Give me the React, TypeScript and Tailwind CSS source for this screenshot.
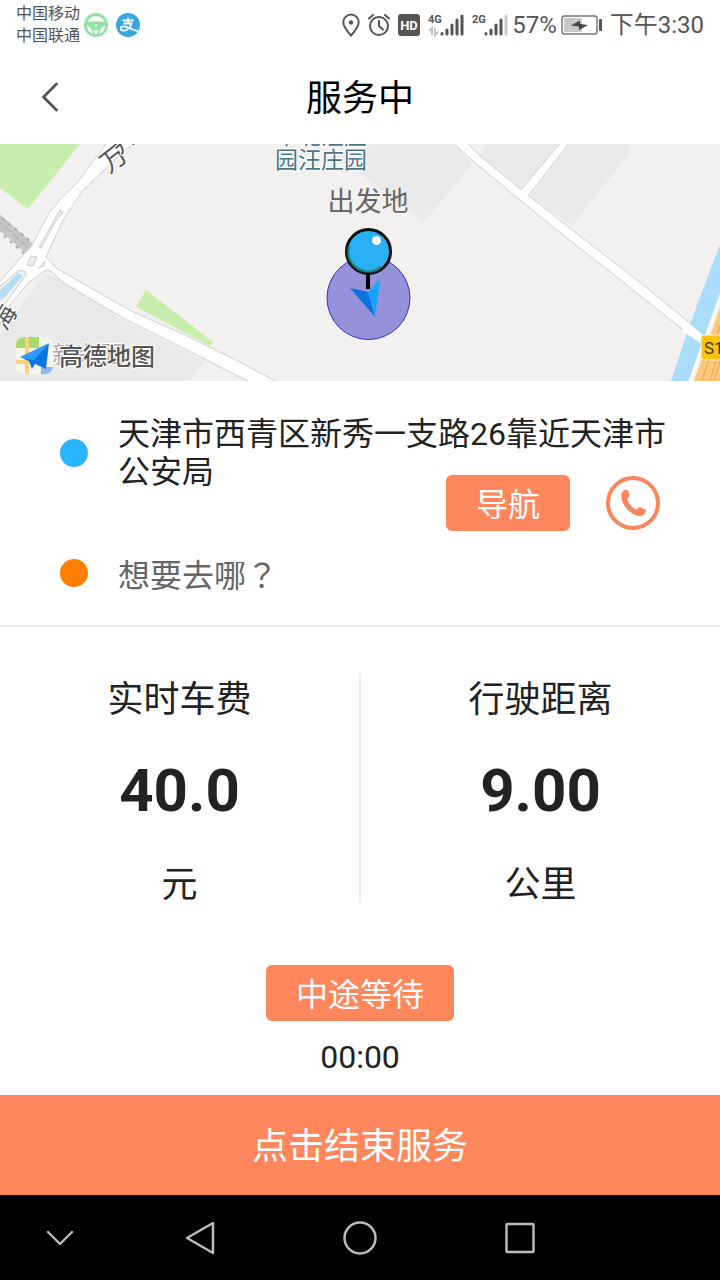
import { ChevronDown, ChevronLeft } from "lucide-react";

function Carriers() {
  return (
    <div className="flex items-center gap-1">
      <div className="text-base leading-[22px] text-[#555555]">
        <p>中国移动</p>
        <p>中国联通</p>
      </div>
      <svg className="size-6" viewBox="0 0 24 24" aria-hidden="true">
        <circle cx="12" cy="12" r="12" fill="#93e3a4" />
        <path d="M3.500 9A9.200 9.200 0 0 1 20.500 9Q12 7.500 3.500 9Z" fill="#fff" />
        <path
          d="M2.700 12.500Q7.500 13.500 8.800 20.800A9.300 9.300 0 0 1 2.700 12.500ZM21.300 12.500Q16.500 13.500 15.200 20.800A9.300 9.300 0 0 0 21.300 12.500Z"
          fill="#fff"
        />
        <path d="M10.800 21.200L9.500 18Q12 16 14.500 18L13.200 21.200Z" fill="#fff" />
        <circle cx="12" cy="12.300" r="1.300" fill="#fff" />
      </svg>
      <svg className="ml-1 size-6" viewBox="0 0 24 24" aria-hidden="true">
        <circle cx="12" cy="12" r="12" fill="#36a6dd" />
        <path
          d="M6.500 7.500H17.500M12 4.500V10.500M7.500 10.500H15.500C14.500 14 11.500 17.700 7.500 17.700C3.800 17.700 3.800 13.300 7.500 13.300C11.500 13.300 15 16.500 22.500 18.300"
          fill="none"
          stroke="#fff"
          strokeWidth="1.800"
        />
      </svg>
    </div>
  );
}

function Signal({ label, weak }: { label: string; weak?: boolean }) {
  return (
    <svg className="h-6 w-9" viewBox="0 0 36 24" aria-hidden="true">
      <text x="0" y="10" fontSize="11" fontWeight="700" fill="#555">
        {label}
      </text>
      {!weak && (
        <path d="M4 22V15L1 18M7 15V22L10 19" fill="none" stroke="#c4c4c4" strokeWidth="2" />
      )}
      <g strokeWidth="3" strokeLinecap="round" stroke="#555">
        <path d="M14 21V20.500M19 21V17M24 21V12M29 21V7" />
        <path d="M34 21V3" stroke={weak ? "#cccccc" : "#555555"} />
      </g>
    </svg>
  );
}

function StatusBar() {
  return (
    <div className="flex h-[50px] items-center justify-between px-4 text-[#555555]">
      <Carriers />
      <div className="flex items-center gap-2 text-2xl">
        <svg className="h-6 w-[18px]" viewBox="0 0 18 24" fill="none" stroke="#555" strokeWidth="2" aria-hidden="true">
          <path d="M9 22.500C5 18 1.300 14 1.300 9.300A7.700 7.700 0 0 1 16.700 9.300C16.700 14 13 18 9 22.500Z" />
          <circle cx="9" cy="9.500" r="2.200" fill="#555" stroke="none" />
        </svg>
        <svg className="h-6 w-[22px]" viewBox="0 0 22 24" fill="none" stroke="#555" strokeWidth="2" aria-hidden="true">
          <circle cx="11" cy="13" r="9" />
          <path d="M11 8V13L15 16.500M1 5.500L5 2M21 5.500L17 2" strokeLinecap="round" />
        </svg>
        <svg className="h-6 w-[22px]" viewBox="0 0 22 24" aria-hidden="true">
          <rect y="1" width="22" height="22" rx="3" fill="#555" />
          <text x="11" y="17" fontSize="13" fontWeight="700" fill="#fff" textAnchor="middle">
            HD
          </text>
        </svg>
        <Signal label="4G" />
        <Signal label="2G" weak />
        <span className="-mx-1">57%</span>
        <svg className="h-5 w-[41px]" viewBox="0 0 41 20" aria-hidden="true">
          <rect x="1" y="1" width="35" height="18" rx="2.500" fill="#fff" stroke="#777" strokeWidth="1.500" />
          <rect x="3" y="3" width="18" height="14" fill="#c8c8c8" />
          <path d="M10 10.500L19 5.500V9L27 10L18 15V11.500Z" fill="#444" />
          <rect x="38" y="4" width="3" height="12" rx="1" fill="#555" />
        </svg>
        <span>下午3:30</span>
      </div>
    </div>
  );
}

function TripMap() {
  return (
    <svg
      className="block w-full"
      viewBox="0 0 720 237"
      role="img"
      aria-label="高德地图"
      strokeLinejoin="round"
    >
      <rect width="720" height="237" fill="#f2f1f0" />
      {/* blocks */}
      <path d="M45 130L60 135L120 175L204 217L190 237H0V190Z" fill="#e9e9e9" />
      <path d="M335 10L375 0H455L472 20L424 78Z" fill="#e9e9e9" />
      <path d="M486 0H558L521 47L480 11ZM570 0H630V8L572 82L530 51Z" fill="#e9e9e9" />
      <path d="M0 0H80L28 65L0 44Z" fill="#c8eeae" />
      <path d="M146 146L213 198L210 202L136 163Z" fill="#c8eeae" />
      {/* railway */}
      <path d="M-4 75L31 106" stroke="#c5c5c5" strokeWidth="12" />
      <path d="M-4 69L35 101M-8 81L27 112" stroke="#aaa" strokeDasharray="3 5" strokeWidth="2" />
      <path d="M-4 75L31 106" stroke="#aaa" strokeDasharray="8 3" />
      {/* roads */}
      <g fill="#fff" stroke="#cfcfcf">
        <path d="M108 -2L77 39Q60 54 49 69L31 103L21 113L-2 140V180L6 166L28 139L46 126L51 127L64 139L123 174L183 204L250 238H277L236 216L183 190L133 168L89 143L56 124L46 113L63 76L83 46L134 -2Z" />
        <path d="M466 -2L480 12L523 47L580 92L647 144L702 189V201L687 189L613 130L553 83L480 23L452 -2Z" />
        <path d="M561 -2L521 46L528 52L570 -2Z" />
      </g>
      <path d="M520 48L527 53" stroke="#fff" strokeWidth="5" />
      <path d="M39 103L60 66L63 68L56 77L41 104Z" fill="#eee" stroke="#ccc" />
      <path d="M31 112L37 113L33 122L27 121ZM39 124L45 117L44 122Z" fill="#eee" stroke="#ccc" />
      <path d="M-2 144L18 127Q25 125 26 131L2 164H-2Z" fill="#f2f1f0" stroke="#ccc" />
      <path d="M-1 147L18 129L23 132L4 154L-1 156Z" fill="#b4ddf5" />
      {/* river and highway */}
      <path d="M722 95L690 180L671 237H690L722 148Z" fill="#aadcfb" />
      <path d="M722 148L690 237" stroke="#fff" strokeWidth="3" />
      <path d="M722 158L694 237H722Z" fill="#ffc878" />
      <path d="M722 176L702 237M722 196L710 237M722 210L714 237" stroke="#dfa050" />
      <path d="M686 177L702 190V200L682 187Z" fill="#fff" />
      <rect x="701" y="191" width="26" height="25" rx="3" fill="#fbc414" stroke="#fff2c8" />
      <text x="704" y="210" fontSize="17" fill="#4a3a10">
        S1
      </text>
      {/* place names */}
      <g fill="#555" stroke="#fff" strokeWidth="2" paintOrder="stroke" fontSize="24">
        <text transform="translate(109 30) rotate(-38)" fontSize="26">
          万
        </text>
        <text transform="translate(120 11) rotate(-42)">卉</text>
        <text transform="translate(6 188) rotate(-60)">海</text>
        <g fill="#4a7689" fontSize="23">
          <text x="275" y="0">
            中北汪庄
          </text>
          <text x="275" y="24">
            园汪庄园
          </text>
        </g>
        <text x="52" y="219" fill="#aaa">
          新兴园
        </text>
      </g>
      <text x="368" y="67" fontSize="27" fill="#666" textAnchor="middle">
        出发地
      </text>
      {/* current position */}
      <circle cx="368.500" cy="154" r="41.500" fill="#9392da" stroke="#3430b8" />
      <path d="M368 126V145" stroke="#000" strokeWidth="4" />
      <circle cx="368.500" cy="107.500" r="22" fill="#29b1f8" stroke="#0b1010" strokeWidth="3" />
      <path d="M349 102A20 20 0 0 0 381 123" fill="none" stroke="#18785f" strokeOpacity="0.6" strokeWidth="3" />
      <circle cx="376.500" cy="96.500" r="4.500" fill="#fff" />
      <path d="M350 144L368 148L375 173Z" fill="#0d72dd" />
      <path d="M368 148L380 135L375 173Z" fill="#12a5fa" />
      {/* provider logo */}
      <clipPath id="logo">
        <rect x="16" y="193" width="37" height="37" rx="8" />
      </clipPath>
      <g clipPath="url(#logo)">
        <rect x="16" y="193" width="37" height="37" fill="#f7f4ea" />
        <path d="M16 193H39V204H16Z" fill="#a5d96b" />
        <path d="M41 223H53V230H41Z" fill="#8db8f5" />
        <path d="M27 193V230M16 218H40" stroke="#fbd07a" strokeWidth="4" />
      </g>
      <path d="M20 213L49 199L34 217Z" fill="#2b9df7" />
      <path d="M49 199L46 225L20 213L34 216ZM29 217L35 220L32 225Z" fill="#0c76e0" />
      <text
        x="59"
        y="221"
        fontSize="24"
        fontWeight="500"
        fill="#555"
        stroke="#fff"
        strokeWidth="2"
        paintOrder="stroke"
      >
        高德地图
      </text>
    </svg>
  );
}

function Stat({ label, value, unit }: { label: string; value: string; unit: string }) {
  return (
    <div className="flex flex-1 flex-col items-center">
      <h2 className="text-4xl leading-[54px]">{label}</h2>
      <p className="mt-7 mb-10 text-6xl leading-[72px] font-bold">{value}</p>
      <p className="text-4xl leading-9">{unit}</p>
    </div>
  );
}

export default function App() {
  return (
    <div className="flex min-h-screen flex-col bg-white font-[Roboto,'Noto_Sans_CJK_SC',sans-serif] text-[#222222]">
      <StatusBar />
      <header className="grid h-[94px] grid-cols-[1fr_auto_1fr] items-center px-6 text-black">
        <button aria-label="返回" className="w-fit text-[#555555]">
          <ChevronLeft className="size-[52px]" strokeWidth={1.3} />
        </button>
        <h1 className="pt-1 text-4xl">服务中</h1>
      </header>

      <TripMap />

      <main className="flex flex-1 flex-col">
        <section className="border-b-2 border-[#eeeeee] px-[60px] pt-[34px] pb-[30px] text-[32px]">
          <div className="flex items-center gap-[30px]">
            <span className="size-7 shrink-0 rounded-full bg-[#29b6ff]" />
            <p className="-mr-2 flex-1 leading-[38px]">天津市西青区新秀一支路26靠近天津市公安局</p>
          </div>
          <div className="-mt-4 flex items-center justify-end gap-9">
            <button className="h-14 rounded-md bg-[#ff875b] px-[30px] pt-1 text-white">导航</button>
            <button
              aria-label="电话"
              className="flex size-[54px] items-center justify-center rounded-full border-4 border-[#f58660] text-[#f58660]"
            >
              <svg className="size-7" viewBox="0 0 28 28" fill="currentColor" aria-hidden="true">
                <path d="M2.500 4.500C3.500 1.500 7.500-0.500 9 1.500L10.500 6C11 8 7.800 8.800 8.200 10.200C9.500 14.500 13.500 18.700 17.200 20.500C18.800 21 19.500 17.700 21.800 18.500L26.300 20.500C28 22.500 25.500 26.500 22 27C12 27.500 0.500 14.500 2.500 4.500Z" />
              </svg>
            </button>
          </div>
          <label className="mt-5 flex items-center gap-[30px]">
            <span className="size-7 shrink-0 rounded-full bg-[#ff8000]" />
            <input
              aria-label="目的地"
              placeholder="想要去哪？"
              className="h-11 min-w-0 flex-1 font-['Noto_Sans_CJK_TC',sans-serif] outline-none placeholder:text-[#666666]"
            />
          </label>
        </section>

        <section className="mt-[46px] flex divide-x-2 divide-[#eeeeee]">
          <Stat label="实时车费" value="40.0" unit="元" />
          <Stat label="行驶距离" value="9.00" unit="公里" />
        </section>

        <section className="mt-[62px] flex flex-1 flex-col items-center text-[32px]">
          <button className="h-14 rounded-md bg-[#ff875b] px-[30px] pt-1 text-white">中途等待</button>
          <time className="mt-4 leading-10">00:00</time>
        </section>
      </main>

      <button className="h-[100px] bg-[#ff875b] pt-1 text-4xl text-white">点击结束服务</button>
      <nav className="grid h-[85px] grid-cols-[3fr_4fr_4fr_4fr_3fr] place-items-center bg-black text-[#bbbbbb]">
        <button aria-label="收起">
          <ChevronDown className="size-12" strokeWidth={1.2} />
        </button>
        <button aria-label="后退">
          <svg className="size-9" viewBox="0 0 36 36" fill="none" stroke="currentColor" strokeWidth="2.500">
            <path d="M31 3V33L5 18Z" strokeLinejoin="round" />
          </svg>
        </button>
        <button aria-label="主页">
          <svg className="size-9" viewBox="0 0 36 36" fill="none" stroke="currentColor" strokeWidth="2.500">
            <circle cx="18" cy="18" r="15.500" />
          </svg>
        </button>
        <button aria-label="最近任务">
          <svg className="size-9" viewBox="0 0 36 36" fill="none" stroke="currentColor" strokeWidth="2.500">
            <rect x="4.500" y="4" width="27" height="28" rx="1" />
          </svg>
        </button>
      </nav>
    </div>
  );
}
